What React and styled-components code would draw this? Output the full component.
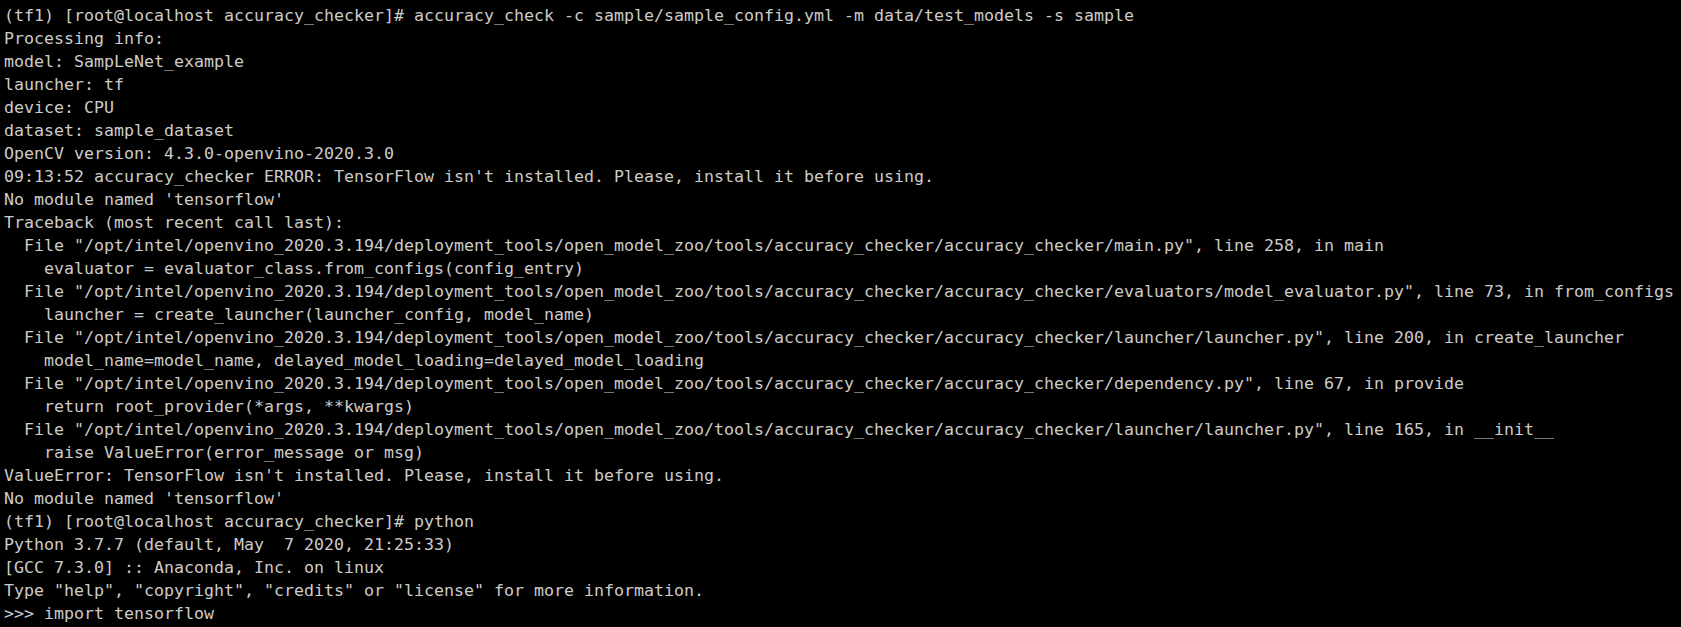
import React from "react";
import styled, { createGlobalStyle } from "styled-components";

const GlobalStyle = createGlobalStyle`
  html, body {
    margin: 0;
    padding: 0;
    background: #000000;
  }
  body {
    overflow: hidden;
  }
`;

const Terminal = styled.div`
  box-sizing: border-box;
  width: 1681px;
  height: 627px;
  background: #000000;
  color: #cccccc;
  font-family: "DejaVu Sans Mono", "Liberation Mono", monospace;
  font-size: 16.61px;
  line-height: 23px;
  padding: 0 0 2px 4px;
  display: flex;
  flex-direction: column;
  justify-content: flex-end;
  overflow: hidden;
`;

const Line = styled.div`
  flex: none;
  height: 23px;
  white-space: pre;
  padding-left: ${(p) => (p.$indent || 0) * 10}px;
`;

const BASE =
  "/opt/intel/openvino_2020.3.194/deployment_tools/open_model_zoo/tools/accuracy_checker/accuracy_checker/";

const lines = [
  {
    text:
      "(tf1) [root@localhost accuracy_checker]# accuracy_check -c sample/sample_config.yml -m data/test_models -s sample",
  },
  { text: "Processing info:" },
  { text: "model: SampLeNet_example" },
  { text: "launcher: tf" },
  { text: "device: CPU" },
  { text: "dataset: sample_dataset" },
  { text: "OpenCV version: 4.3.0-openvino-2020.3.0" },
  {
    text:
      "09:13:52 accuracy_checker ERROR: TensorFlow isn't installed. Please, install it before using.",
  },
  { text: "No module named 'tensorflow'" },
  { text: "Traceback (most recent call last):" },
  { indent: 2, text: `File "${BASE}main.py", line 258, in main` },
  { indent: 4, text: "evaluator = evaluator_class.from_configs(config_entry)" },
  {
    indent: 2,
    text: `File "${BASE}evaluators/model_evaluator.py", line 73, in from_configs`,
  },
  { indent: 4, text: "launcher = create_launcher(launcher_config, model_name)" },
  {
    indent: 2,
    text: `File "${BASE}launcher/launcher.py", line 200, in create_launcher`,
  },
  {
    indent: 4,
    text: "model_name=model_name, delayed_model_loading=delayed_model_loading",
  },
  { indent: 2, text: `File "${BASE}dependency.py", line 67, in provide` },
  { indent: 4, text: "return root_provider(*args, **kwargs)" },
  {
    indent: 2,
    text: `File "${BASE}launcher/launcher.py", line 165, in __init__`,
  },
  { indent: 4, text: "raise ValueError(error_message or msg)" },
  {
    text: "ValueError: TensorFlow isn't installed. Please, install it before using.",
  },
  { text: "No module named 'tensorflow'" },
  { text: "(tf1) [root@localhost accuracy_checker]# python" },
  { text: "Python 3.7.7 (default, May  7 2020, 21:25:33)" },
  { text: "[GCC 7.3.0] :: Anaconda, Inc. on linux" },
  {
    text:
      'Type "help", "copyright", "credits" or "license" for more information.',
  },
  { text: ">>> import tensorflow" },
];

export default function App() {
  return (
    <>
      <GlobalStyle />
      <Terminal>
        {lines.map((l, i) => (
          <Line key={i} $indent={l.indent}>
            {l.text}
          </Line>
        ))}
      </Terminal>
    </>
  );
}
